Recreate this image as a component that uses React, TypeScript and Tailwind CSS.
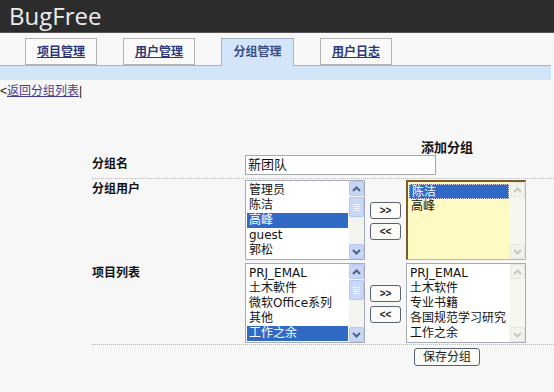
import React from "react";

const FONT = { fontFamily: '"Liberation Sans", "Noto Sans CJK SC", sans-serif' };
const LIST_FONT = { fontFamily: '"DejaVu Sans", "Noto Sans CJK SC", sans-serif' };

function ScrollBar({ enabled, thumb }: { enabled: boolean; thumb: boolean }) {
  const arrowColor = enabled ? "#4d6185" : "#c8c8c0";
  return (
    <div className={`w-[15px] h-full flex flex-col ${enabled ? "bg-[#f3f4ef]" : "bg-[#f7f7f2]"}`}>
      <div
        className={`h-[15px] w-[15px] flex items-center justify-center rounded-[2px] border ${
          enabled ? "bg-[#c7d6f6] border-[#b8c8ee]" : "bg-[#f3f3ee] border-[#e6e6df]"
        }`}
      >
        <svg width="9" height="6" viewBox="0 0 9 6">
          <path d="M1 5 L4.5 1.5 L8 5" stroke={arrowColor} strokeWidth="2" fill="none" />
        </svg>
      </div>
      {thumb ? (
        <div className="h-[20px] mt-[1px] rounded-[2px] bg-[#c9d8f6] border border-[#b4c6ee] flex flex-col items-center justify-center gap-[1px]">
          <div className="w-[7px] h-[1px] bg-[#eef3fe]" />
          <div className="w-[7px] h-[1px] bg-[#eef3fe]" />
          <div className="w-[7px] h-[1px] bg-[#eef3fe]" />
          <div className="w-[7px] h-[1px] bg-[#eef3fe]" />
        </div>
      ) : null}
      <div className="flex-1" />
      <div
        className={`h-[15px] w-[15px] flex items-center justify-center rounded-[2px] border ${
          enabled ? "bg-[#c7d6f6] border-[#b8c8ee]" : "bg-[#f3f3ee] border-[#e6e6df]"
        }`}
      >
        <svg width="9" height="6" viewBox="0 0 9 6">
          <path d="M1 1 L4.5 4.5 L8 1" stroke={arrowColor} strokeWidth="2" fill="none" />
        </svg>
      </div>
    </div>
  );
}

function ListBox({
  items,
  selected,
  yellow,
  enabled,
  thumb,
  focus,
}: {
  items: string[];
  selected: number;
  yellow?: boolean;
  enabled: boolean;
  thumb: boolean;
  focus?: boolean;
}) {
  return (
    <div
      className={`w-[120px] h-[80px] flex overflow-hidden ${
        yellow
          ? "bg-[#fff9c4] border-t-2 border-l-2 border-r border-b border-t-[#7a5a2a] border-l-[#7a5a2a] border-r-[#c8b898] border-b-[#c8b898]"
          : "bg-white border border-[#a5acb5]"
      }`}
    >
      <div className="flex-1 pt-[2px] pl-[1px] pr-[1px] overflow-hidden" style={LIST_FONT}>
        {items.map((it, i) => (
          <div
            key={i}
            className={`h-[15px] leading-[15px] text-[12px] pl-[2px] whitespace-nowrap ${
              i === selected ? "bg-[#316ac5] text-white" : "text-[#111]"
            } ${i === selected && focus ? "border border-dotted border-[#d8dce8] leading-[13px]" : ""}`}
          >
            {it}
          </div>
        ))}
      </div>
      <ScrollBar enabled={enabled} thumb={thumb} />
    </div>
  );
}

function MoveButtons() {
  return (
    <div className="flex flex-col gap-[4px] pt-[22px] w-[31px] mx-[5px]">
      <div className="h-[17px] rounded-[3px] border border-[#5a6270] bg-[#fbfbf8] flex items-center justify-center text-[10px] font-bold text-[#222] leading-none">
        &gt;&gt;
      </div>
      <div className="h-[17px] rounded-[3px] border border-[#5a6270] bg-[#fbfbf8] flex items-center justify-center text-[10px] font-bold text-[#222] leading-none">
        &lt;&lt;
      </div>
    </div>
  );
}

function Tab({ label, active }: { label: string; active?: boolean }) {
  if (active) {
    return (
      <div className="w-[73px] h-[27px] bg-[#d3e5f9] border border-b-0 border-[#a7b3c4] flex items-center justify-center text-[12px] font-bold text-[#3b4d86]">
        {label}
      </div>
    );
  }
  return (
    <div className="w-[72px] h-[27px] bg-[#fafafa] border border-[#b4b4b4] flex items-center justify-center text-[12px] font-bold text-[#2c3875] underline">
      {label}
    </div>
  );
}

export default function App() {
  return (
    <div className="w-[554px] h-[392px] bg-[#f7f7f7] overflow-hidden relative" style={FONT}>
      <div className="h-[33px] bg-[#2c2c2c] border-b border-[#555] flex items-center pl-[9px]">
        <span className="text-[24px] text-[#ececec] leading-none" style={{ fontFamily: '"Open Sans", "Liberation Sans", sans-serif' }}>
          BugFree
        </span>
      </div>
      <div className="h-[32px] flex items-end pl-[25px] gap-[26px]">
        <Tab label="项目管理" />
        <Tab label="用户管理" />
        <Tab label="分组管理" active />
        <Tab label="用户日志" />
      </div>
      <div className="w-[551px] h-[15px] bg-[#d3e5f9] border-t border-[#a7b3c4] relative">
        <div className="absolute left-[222px] top-[-1px] w-[71px] h-[1px] bg-[#d3e5f9]" />
      </div>
      <div className="mt-[5px] text-[12px] leading-[12px] text-[#111]">
        &lt;<span className="text-[#4b3a8c] underline">返回分组列表</span>|
      </div>

      <div className="mt-[44px] pl-[92px]">
        <div className="pl-[329px] text-[13px] font-bold text-[#111] leading-[13px]">添加分组</div>

        <div className="flex mt-[1px] h-[23px]">
          <div className="w-[153px] pt-[0px] text-[12px] font-bold text-[#111]">分组名</div>
          <div className="w-[191px] h-[20px] bg-white border border-[#a3a8ae] text-[13px] leading-[18px] pl-[2px] text-[#111]">
            新团队
          </div>
        </div>
        <div className="border-t border-dotted border-[#b8b8b8]" />

        <div className="flex mt-[1px] h-[83px]">
          <div className="w-[153px] text-[12px] font-bold text-[#111]">分组用户</div>
          <ListBox items={["管理员", "陈洁", "高峰", "guest", "郭松"]} selected={2} enabled thumb />
          <MoveButtons />
          <ListBox items={["陈洁", "高峰"]} selected={0} yellow enabled={false} thumb={false} focus />
        </div>

        <div className="flex h-[81px]">
          <div className="w-[153px] pt-[1px] text-[12px] font-bold text-[#111]">项目列表</div>
          <ListBox items={["PRJ_EMAL", "土木軟件", "微软Office系列", "其他", "工作之余"]} selected={4} enabled thumb />
          <MoveButtons />
          <ListBox
            items={["PRJ_EMAL", "土木软件", "专业书籍", "各国规范学习研究", "工作之余"]}
            selected={-1}
            enabled={false}
            thumb={false}
          />
        </div>
        <div className="border-t border-dotted border-[#b8b8b8]" />

        <div className="pl-[322px] pt-[3px]">
          <div className="w-[66px] h-[18px] rounded-[3px] border border-[#5a6270] bg-[#fbfbf8] flex items-center justify-center text-[12px] text-[#222]">
            保存分组
          </div>
        </div>
      </div>
    </div>
  );
}
